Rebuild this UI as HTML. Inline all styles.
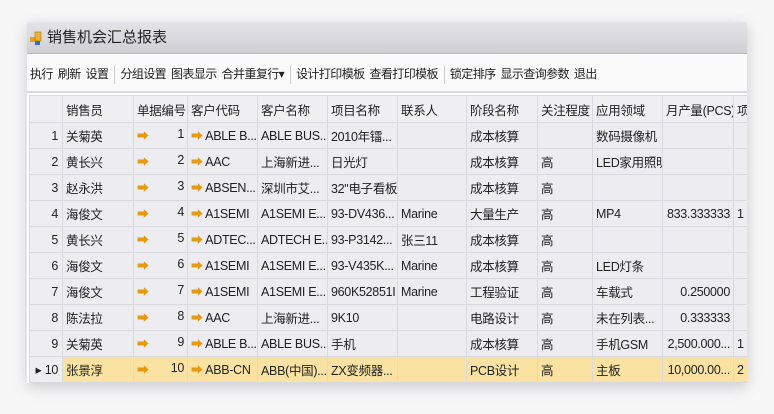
<!DOCTYPE html>
<html><head><meta charset="utf-8"><style>
*{margin:0;padding:0;box-sizing:border-box}
body{width:774px;height:414px;background:#f7f7f8;position:relative;overflow:hidden;font-family:"Liberation Sans","Noto Sans CJK SC",sans-serif;font-size:12.5px;color:#222}
.win{position:absolute;left:27px;top:22px;width:720px;height:361px;background:#fff;box-shadow:0 4px 14px rgba(0,0,0,.18);overflow:hidden}
.title{height:32px;background:linear-gradient(#e4e4e8,#cfcfd5);border-bottom:1px solid #b8b8c0;font-size:15px;line-height:32px;padding-left:20px;position:relative;color:#222}
.ic{position:absolute;left:3px;top:9px;width:12px;height:14px}
.tb{position:absolute;top:33px;left:0;right:0;height:38px;background:#fafafb;border-bottom:2px solid #d8d8de;line-height:38px;font-size:12px;padding-left:3px;white-space:nowrap;letter-spacing:-0.6px}
.tb span{margin-right:5px}
.sep{display:inline-block;width:1px;height:18px;background:#ccc;vertical-align:middle;margin:0 5px 0 1px}
table{position:absolute;top:73px;left:2px;width:724px;border-collapse:collapse;table-layout:fixed;background:#ececf1}
td{border:1px solid #d9d9e0;height:26px;padding:0 3px;white-space:nowrap;overflow:hidden;text-overflow:clip;font-size:12.5px;letter-spacing:-0.3px}
tr.h td{background:#f0f0f3;height:27px}
td.rh{text-align:right;background:#eeeef2;padding-right:4px}
td.r{text-align:right}
tr.sel td{background:#fae3a2}
.ar{color:#e59a10;font-size:12px}
</style></head><body>
<div class="win">
<div class="title"><svg class="ic" viewBox="0 0 12 14"><rect x="0" y="6" width="5" height="5" fill="#e8a020"/><rect x="5" y="1" width="6" height="9" fill="#f0b030" stroke="#b07010" stroke-width=".6"/><rect x="5" y="10" width="5" height="4" fill="#3a70c0"/></svg>销售机会汇总报表</div>
<div class="tb"><span>执行</span><span>刷新</span><span>设置</span><i class="sep"></i><span>分组设置</span><span>图表显示</span><span>合并重复行▾</span><i class="sep"></i><span>设计打印模板</span><span>查看打印模板</span><i class="sep"></i><span>锁定排序</span><span>显示查询参数</span><span>退出</span></div>
<table>
<colgroup><col style="width:33px"><col style="width:71px"><col style="width:54px"><col style="width:70px"><col style="width:70px"><col style="width:70px"><col style="width:69px"><col style="width:71px"><col style="width:55px"><col style="width:70px"><col style="width:71px"><col style="width:20px"></colgroup>
<tr class="h"><td></td><td>销售员</td><td>单据编号</td><td>客户代码</td><td>客户名称</td><td>项目名称</td><td>联系人</td><td>阶段名称</td><td>关注程度</td><td>应用领域</td><td>月产量(PCS)</td><td>项</td></tr>
<tr><td class="rh">1</td><td>关菊英</td><td><span class="ar">➡</span><span style="float:right">1</span></td><td><span class="ar">➡</span> ABLE B...</td><td>ABLE BUS...</td><td>2010年镭...</td><td></td><td>成本核算</td><td></td><td>数码摄像机</td><td></td><td></td></tr>
<tr><td class="rh">2</td><td>黄长兴</td><td><span class="ar">➡</span><span style="float:right">2</span></td><td><span class="ar">➡</span> AAC</td><td>上海新进...</td><td>日光灯</td><td></td><td>成本核算</td><td>高</td><td>LED家用照明</td><td></td><td></td></tr>
<tr><td class="rh">3</td><td>赵永洪</td><td><span class="ar">➡</span><span style="float:right">3</span></td><td><span class="ar">➡</span> ABSEN...</td><td>深圳市艾...</td><td>32"电子看板</td><td></td><td>成本核算</td><td>高</td><td></td><td></td><td></td></tr>
<tr><td class="rh">4</td><td>海俊文</td><td><span class="ar">➡</span><span style="float:right">4</span></td><td><span class="ar">➡</span> A1SEMI</td><td>A1SEMI E...</td><td>93-DV436...</td><td>Marine</td><td>大量生产</td><td>高</td><td>MP4</td><td class="r">833.333333</td><td>1</td></tr>
<tr><td class="rh">5</td><td>黄长兴</td><td><span class="ar">➡</span><span style="float:right">5</span></td><td><span class="ar">➡</span> ADTEC...</td><td>ADTECH E...</td><td>93-P3142...</td><td>张三11</td><td>成本核算</td><td>高</td><td></td><td></td><td></td></tr>
<tr><td class="rh">6</td><td>海俊文</td><td><span class="ar">➡</span><span style="float:right">6</span></td><td><span class="ar">➡</span> A1SEMI</td><td>A1SEMI E...</td><td>93-V435K...</td><td>Marine</td><td>成本核算</td><td>高</td><td>LED灯条</td><td></td><td></td></tr>
<tr><td class="rh">7</td><td>海俊文</td><td><span class="ar">➡</span><span style="float:right">7</span></td><td><span class="ar">➡</span> A1SEMI</td><td>A1SEMI E...</td><td>960K52851I</td><td>Marine</td><td>工程验证</td><td>高</td><td>车载式</td><td class="r">0.250000</td><td></td></tr>
<tr><td class="rh">8</td><td>陈法拉</td><td><span class="ar">➡</span><span style="float:right">8</span></td><td><span class="ar">➡</span> AAC</td><td>上海新进...</td><td>9K10</td><td></td><td>电路设计</td><td>高</td><td>未在列表...</td><td class="r">0.333333</td><td></td></tr>
<tr><td class="rh">9</td><td>关菊英</td><td><span class="ar">➡</span><span style="float:right">9</span></td><td><span class="ar">➡</span> ABLE B...</td><td>ABLE BUS...</td><td>手机</td><td></td><td>成本核算</td><td>高</td><td>手机GSM</td><td class="r">2,500.000...</td><td>1</td></tr>
<tr class="sel"><td class="rh" style="background:#eeeef2">▸ 10</td><td>张景淳</td><td><span class="ar">➡</span><span style="float:right">10</span></td><td><span class="ar">➡</span> ABB-CN</td><td>ABB(中国)...</td><td>ZX变频器...</td><td></td><td>PCB设计</td><td>高</td><td>主板</td><td class="r">10,000.00...</td><td>2</td></tr>
</table>
</div>
</body></html>
